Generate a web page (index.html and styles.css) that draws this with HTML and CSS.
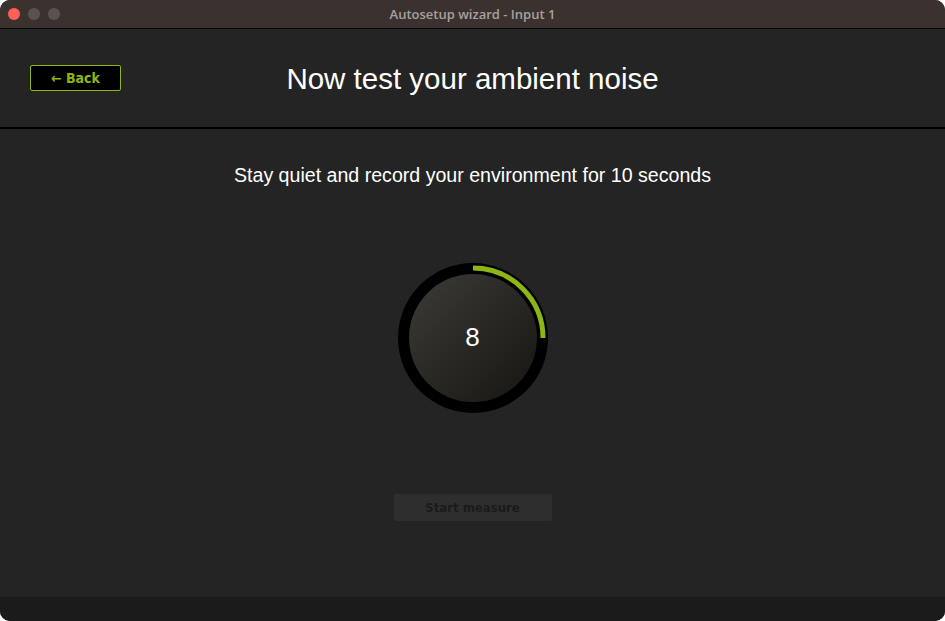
FILE: index.html
```html
<!DOCTYPE html>
<html lang="en">

<head>
	<meta charset="UTF-8">
	<title>Autosetup wizard - Input 1</title>
	<link rel="stylesheet" href="styles.css">
</head>

<body>
	<div id="window">
		<div id="titleBar">
			<div class="lights">
				<span class="light red"></span>
				<span class="light"></span>
				<span class="light"></span>
			</div>
			<span class="title">Autosetup wizard - Input 1</span>
		</div>
		<div id="header">
			<div class="left">
				<button type="button" id="backBtn">&larr; Back</button>
			</div>
			<h1>Now test your ambient noise</h1>
			<div></div>
		</div>
		<div id="content">
			<p class="intro">Stay quiet and record your environment for 10 seconds</p>
			<div id="meter">
				<svg width="150" height="150" viewBox="0 0 150 150">
					<defs>
						<linearGradient id="knob" x1="0" y1="0" x2="1" y2="1">
							<stop offset="0" stop-color="#3d3b38" />
							<stop offset="1" stop-color="#161512" />
						</linearGradient>
					</defs>
					<circle cx="75" cy="75" r="75" fill="#000" />
					<circle cx="75" cy="75" r="64" fill="url(#knob)" />
					<path d="M75 5 A70 70 0 0 1 145 75" fill="none" stroke="#8db513" stroke-width="5" />
				</svg>
				<span class="count">8</span>
			</div>
			<button type="button" id="startBtn" disabled>Start measure</button>
		</div>
		<div id="footer"></div>
	</div>
</body>

</html>
```

FILE: styles.css
```css
* {
	margin: 0;
	padding: 0;
	box-sizing: border-box;
}
body {
	background: #fff;
	font-family: "Liberation Sans", Arial, sans-serif;
}
#window {
	width: 945px;
	height: 621px;
	border-radius: 10px;
	overflow: hidden;
	background: #242424;
	display: flex;
	flex-direction: column;
}
#titleBar {
	height: 29px;
	background: #3b3230;
	border-bottom: 1px solid #000;
	display: flex;
	align-items: center;
	justify-content: center;
	position: relative;
}
.lights {
	position: absolute;
	left: 8px;
	top: 8px;
	display: flex;
	gap: 8px;
}
.light {
	width: 12px;
	height: 12px;
	border-radius: 50%;
	background: #5b5351;
}
.light.red {
	background: #fe5f57;
}
#titleBar .title {
	font-family: "Open Sans", sans-serif;
	font-weight: 600;
	font-size: 13px;
	color: #a8a09e;
	margin-top: -1px;
}
#header {
	height: 100px;
	border-bottom: 2px solid #000;
	display: grid;
	grid-template-columns: 1fr auto 1fr;
	align-items: center;
	padding: 0 30px;
}
#backBtn {
	width: 91px;
	height: 26px;
	background: #000;
	border: 1px solid #8db513;
	border-radius: 2px;
	color: #8db513;
	font-family: "DejaVu Sans Condensed", "DejaVu Sans", sans-serif;
	font-weight: bold;
	font-size: 14px;
	margin-top: -1px;
}
h1 {
	color: #fff;
	font-weight: normal;
	font-size: 29.5px;
	margin-top: 1px;
}
#content {
	flex: 1;
	display: flex;
	flex-direction: column;
	align-items: center;
	padding-top: 34px;
}
.intro {
	color: #fff;
	font-size: 19.6px;
	line-height: 24px;
}
#meter {
	margin-top: 76px;
	width: 150px;
	height: 150px;
	position: relative;
}
#meter svg {
	display: block;
}
#meter .count {
	position: absolute;
	left: 0;
	right: 0;
	top: 59px;
	text-align: center;
	color: #fff;
	font-size: 26px;
	line-height: 30px;
}
#startBtn {
	margin-top: 81px;
	width: 158px;
	height: 27px;
	background: #2e2e2e;
	border: 0;
	border-radius: 2px;
	color: #1b1b1b;
	font-family: "DejaVu Sans Condensed", "DejaVu Sans", sans-serif;
	font-weight: bold;
	font-size: 13px;
}
#footer {
	height: 24px;
	background: #1b1b1b;
}
```
